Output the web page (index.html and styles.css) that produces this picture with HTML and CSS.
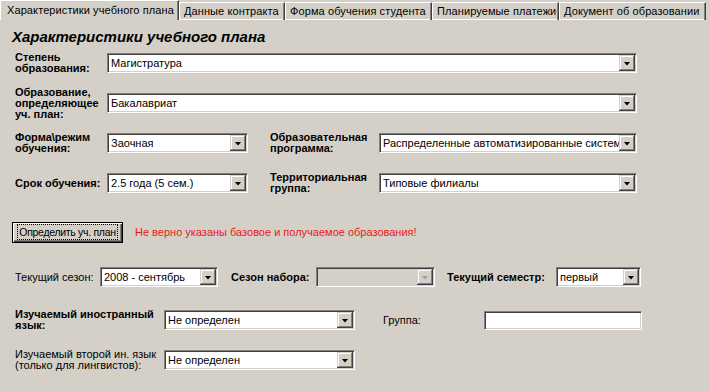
FILE: index.html
```html
<!DOCTYPE html>
<html lang="ru">
<head>
  <meta charset="UTF-8" />
  <title>Характеристики учебного плана</title>
  <link rel="stylesheet" href="styles.css">
</head>
<body>

  <div class="tabs">
    <div class="tab active t1">Характеристики учебного плана</div>
    <div class="tab t2">Данные контракта</div>
    <div class="tab t3">Форма обучения студента</div>
    <div class="tab t4">Планируемые платежи</div>
    <div class="tab t5">Документ об образовании</div>
  </div>

  <div class="panel">
    <h1 class="title">Характеристики учебного плана</h1>

    <div class="row r1">
      <label class="lbl bold w-main">Степень<br>образования:</label>
      <div class="combo c-wide"><span class="combo-text">Магистратура</span><span class="combo-btn"></span></div>
    </div>

    <div class="row r2">
      <label class="lbl bold w-main">Образование,<br>определяющее<br>уч. план:</label>
      <div class="combo c-wide"><span class="combo-text">Бакалавриат</span><span class="combo-btn"></span></div>
    </div>

    <div class="row r3">
      <label class="lbl bold w-main">Форма\режим<br>обучения:</label>
      <div class="combo c-short"><span class="combo-text">Заочная</span><span class="combo-btn"></span></div>
      <label class="lbl bold w-side">Образовательная<br>программа:</label>
      <div class="combo c-side"><span class="combo-text">Распределенные автоматизированные систем</span><span class="combo-btn"></span></div>
    </div>

    <div class="row r4">
      <label class="lbl bold w-main">Срок обучения:</label>
      <div class="combo c-short"><span class="combo-text">2.5 года (5 сем.)</span><span class="combo-btn"></span></div>
      <label class="lbl bold w-side">Территориальная<br>группа:</label>
      <div class="combo c-side"><span class="combo-text">Типовые филиалы</span><span class="combo-btn"></span></div>
    </div>

    <div class="row r5">
      <button class="btn"><span class="focus">Определить уч. план</span></button>
      <span class="error">Не верно указаны базовое и получаемое образования!</span>
    </div>

    <div class="row r6">
      <label class="lbl w-season">Текущий сезон:</label>
      <div class="combo c-season"><span class="combo-text">2008 - сентябрь</span><span class="combo-btn"></span></div>
      <label class="lbl bold w-intake">Сезон набора:</label>
      <div class="combo c-intake disabled"><span class="combo-text"></span><span class="combo-btn"></span></div>
      <label class="lbl bold w-term">Текущий семестр:</label>
      <div class="combo c-term"><span class="combo-text">первый</span><span class="combo-btn"></span></div>
    </div>

    <div class="row r7">
      <label class="lbl bold w-lang">Изучаемый иностранный<br>язык:</label>
      <div class="combo c-lang"><span class="combo-text">Не определен</span><span class="combo-btn"></span></div>
      <label class="lbl w-group">Группа:</label>
      <div class="field"></div>
    </div>

    <div class="row r8">
      <label class="lbl w-lang">Изучаемый второй ин. язык<br>(только для лингвистов):</label>
      <div class="combo c-lang"><span class="combo-text">Не определен</span><span class="combo-btn"></span></div>
    </div>
  </div>

</body>
</html>
```

FILE: styles.css
```css
:root {
  --face: #d4d0c8;
  --shadow: #808080;
  --dark: #404040;
  --light: #ffffff;
}

* { box-sizing: border-box; }

body {
  margin: 0;
  background: var(--face);
  color: #000;
  font-family: "Liberation Sans", Arial, sans-serif;
  font-size: 11px;
  width: 710px;
  height: 391px;
  overflow: hidden;
}

/* tab strip */
.tabs {
  display: flex;
  align-items: flex-end;
  height: 20px;
}

.tab {
  flex: none;
  height: 18px;
  line-height: 16px;
  padding-left: 4px;
  white-space: nowrap;
  letter-spacing: 0.1px;
  border-top: 1px solid var(--light);
  border-left: 1px solid var(--light);
  border-right: 1px solid var(--dark);
  box-shadow: inset -1px 0 var(--shadow), inset 0 -1px var(--light);
}

.tab.active {
  height: 20px;
  line-height: 18px;
  padding-left: 6px;
  box-shadow: inset -1px 0 var(--shadow);
}

.t1 { width: 179px; }
.t2 { width: 106px; }
.t3 { width: 147px; }
.t4 { width: 127px; }
.t5 { width: 147px; }

/* panel */
.panel {
  padding-left: 15px;
}

.title {
  margin: 0 0 0 -3px;
  padding-top: 11px;
  height: 23px;
  line-height: 12px;
  font-size: 15px;
  font-weight: bold;
  font-style: italic;
  white-space: nowrap;
}

.row {
  display: flex;
  align-items: center;
}

.r1, .r2, .r3, .r4 { height: 40px; }
.r5 { height: 58px; }
.r6 { height: 32px; }
.r7 { height: 54px; }
.r8 { height: 26px; }

.lbl {
  line-height: 11px;
  white-space: nowrap;
  flex: none;
}

.bold { font-weight: bold; }

.w-main { width: 92px; }
.w-side { width: 109px; margin-left: 22px; }
.w-season { width: 85px; }
.w-intake { width: 85px; margin-left: 13px; }
.w-term { width: 109px; margin-left: 12px; }
.w-lang { width: 149px; }
.w-group { width: 101px; margin-left: 28px; }

/* combo boxes */
.combo {
  display: flex;
  flex: none;
  height: 20px;
  padding: 1px;
  background: #fff;
  border: 1px solid;
  border-color: var(--shadow) var(--light) var(--light) var(--shadow);
  box-shadow: inset 1px 1px var(--dark), inset -1px -1px var(--face);
}

.c-wide { width: 530px; }
.c-short { width: 141px; }
.c-side { width: 258px; }
.c-season { width: 118px; }
.c-intake { width: 119px; }
.c-term { width: 85px; }
.c-lang { width: 191px; }

.combo-text {
  flex: 1;
  min-width: 0;
  overflow: hidden;
  white-space: nowrap;
  line-height: 16px;
  padding-left: 2px;
}

.combo-btn {
  flex: none;
  width: 16px;
  height: 16px;
  display: flex;
  align-items: center;
  justify-content: center;
  background: var(--face);
  box-shadow: inset -1px -1px var(--dark), inset 1px 1px var(--face),
              inset -2px -2px var(--shadow), inset 2px 2px var(--light);
}

.combo-btn::after {
  content: "";
  width: 7px;
  height: 4px;
  margin-top: 1px;
  background: #000;
  clip-path: polygon(0 0, 100% 0, 50% 100%);
}

.combo.disabled { background: var(--face); }
.combo.disabled .combo-btn::after { background: #a0a0a0; }

.field {
  width: 158px;
  height: 19px;
  background: #fff;
  border: 1px solid;
  border-color: var(--shadow) var(--light) var(--light) var(--shadow);
  box-shadow: inset 1px 1px var(--dark), inset -1px -1px var(--face);
}

/* button */
.btn {
  margin-left: -3px;
  width: 111px;
  height: 21px;
  padding: 0;
  font: inherit;
  color: #000;
  background: var(--face);
  border: 1px solid #000;
  box-shadow: inset 1px 1px var(--light), inset -1px -1px var(--dark), inset -2px -2px var(--shadow);
  display: flex;
  align-items: center;
  justify-content: center;
}

.focus {
  outline: 1px dotted #000;
  outline-offset: 1px;
  line-height: 12px;
  font-size: 10.5px;
  letter-spacing: -0.3px;
  white-space: nowrap;
}

.error {
  margin-left: 12px;
  color: #e81818;
  white-space: nowrap;
}
```
